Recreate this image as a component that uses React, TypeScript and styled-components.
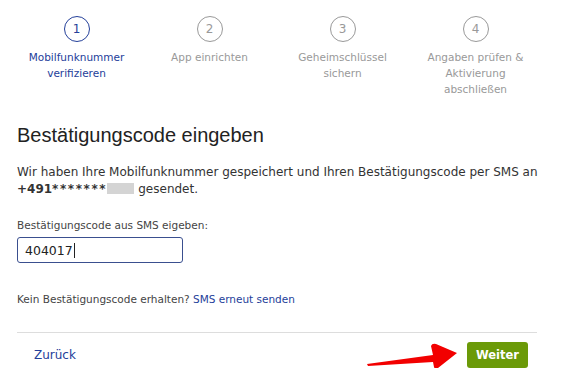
import React from 'react';
import styled, { createGlobalStyle } from 'styled-components';

const GlobalStyle = createGlobalStyle`
    html, body {
        margin: 0;
        padding: 0;
        background: #fff;
    }
    body {
        font-family: 'DejaVu Sans', Verdana, sans-serif;
        color: #333;
    }
`;

const steps = [
    { n: 1, label: ['Mobilfunknummer', 'verifizieren'] },
    { n: 2, label: ['App einrichten'] },
    { n: 3, label: ['Geheimschlüssel', 'sichern'] },
    { n: 4, label: ['Angaben prüfen &', 'Aktivierung', 'abschließen'] },
];

export default function App() {
    return (
        <>
            <GlobalStyle />
            <Page>
                <Stepper>
                    {steps.map((s, i) => (
                        <Step key={s.n} active={i === 0}>
                            <Circle active={i === 0}>{s.n}</Circle>
                            <StepLabel>
                                {s.label.map((l) => (
                                    <div key={l}>{l}</div>
                                ))}
                            </StepLabel>
                        </Step>
                    ))}
                </Stepper>

                <Title>Bestätigungscode eingeben</Title>
                <Text>
                    Wir haben Ihre Mobilfunknummer gespeichert und Ihren Bestätigungscode per SMS an
                    <br />
                    <strong>
                        +491<Stars>*******</Stars>
                    </strong>
                    <Masked />
                    gesendet.
                </Text>

                <Field>
                    <Label htmlFor="code">Bestätigungscode aus SMS eigeben:</Label>
                    <CodeInput id="code">
                        404017<Caret />
                    </CodeInput>
                </Field>

                <Hint>
                    Kein Bestätigungscode erhalten? <Link href="#">SMS erneut senden</Link>
                </Hint>

                <Footer>
                    <BackLink href="#">Zurück</BackLink>
                    <NextButton>Weiter</NextButton>
                    <Arrow width="92" height="28" viewBox="0 0 92 28">
                        <path
                            d="M0 21 L66 12 L64 3 Q65 0 69 1 L90 10 L71 25 Q68 27 67 24 L66 19 L1 23 Z"
                            fill="#f20000"
                        />
                    </Arrow>
                </Footer>
            </Page>
        </>
    );
}

const Page = styled.div`
    width: 520px;
    padding: 0 0 0 17px;
`;

const Stepper = styled.div`
    display: grid;
    grid-template-columns: repeat(4, 133px);
    margin: 0 0 0 -7px;
    padding-top: 16px;
`;

const Step = styled.div<{ active?: boolean }>`
    display: flex;
    flex-direction: column;
    align-items: center;
    color: ${(p) => (p.active ? '#24409a' : '#999')};
`;

const Circle = styled.div<{ active?: boolean }>`
    width: 24px;
    height: 24px;
    border-radius: 50%;
    border: 1px solid ${(p) => (p.active ? '#24409a' : '#999')};
    display: flex;
    align-items: center;
    justify-content: center;
    font-size: 12px;
`;

const StepLabel = styled.div`
    margin-top: 7px;
    font-size: 10.5px;
    line-height: 16px;
    text-align: center;
`;

const Title = styled.h1`
    margin: 26px 0 0;
    font-family: 'Liberation Sans', Arial, sans-serif;
    font-weight: 400;
    font-size: 20px;
    line-height: 24px;
    color: #222;
`;

const Text = styled.p`
    width: 545px;
    margin: 17px 0 0;
    font-size: 12px;
    line-height: 17px;
    color: #333;

    strong {
        font-weight: 700;
    }
`;

const Stars = styled.span`
    letter-spacing: 1.6px;
`;

const Masked = styled.span`
    display: inline-block;
    width: 27px;
    height: 11px;
    margin: 0 4px 0 0;
    background: #d4d4d4;
    vertical-align: -1px;
`;

const Field = styled.div`
    margin-top: 20px;
    display: flex;
    flex-direction: column;
    align-items: flex-start;
`;

const Label = styled.label`
    font-size: 10.5px;
    line-height: 14px;
    color: #444;
`;

const CodeInput = styled.div`
    margin-top: 5px;
    box-sizing: border-box;
    width: 166px;
    height: 26px;
    padding: 0 7px;
    border: 1px solid #3a4f8f;
    border-radius: 3px;
    display: flex;
    align-items: center;
    font-size: 12.5px;
    color: #222;
`;

const Caret = styled.span`
    display: inline-block;
    width: 1px;
    height: 15px;
    background: #222;
    margin-left: 1px;
`;

const Hint = styled.p`
    margin: 29px 0 0;
    font-size: 10.5px;
    line-height: 14px;
    color: #444;
`;

const Link = styled.a`
    color: #24409a;
    text-decoration: none;
`;

const Footer = styled.div`
    position: relative;
    margin-top: 26px;
    border-top: 1px solid #ddd;
    display: flex;
    align-items: center;
    justify-content: space-between;
    padding: 9px 9px 0 17px;
`;

const BackLink = styled.a`
    font-size: 12px;
    color: #24409a;
    text-decoration: none;
`;

const NextButton = styled.button`
    width: 61px;
    height: 26px;
    border: none;
    border-radius: 3px;
    background: #6b9a08;
    color: #fff;
    font-family: 'DejaVu Sans', Verdana, sans-serif;
    font-size: 11.5px;
    font-weight: 700;
    cursor: pointer;
`;

const Arrow = styled.svg`
    position: absolute;
    left: 350px;
    top: 10px;
`;
